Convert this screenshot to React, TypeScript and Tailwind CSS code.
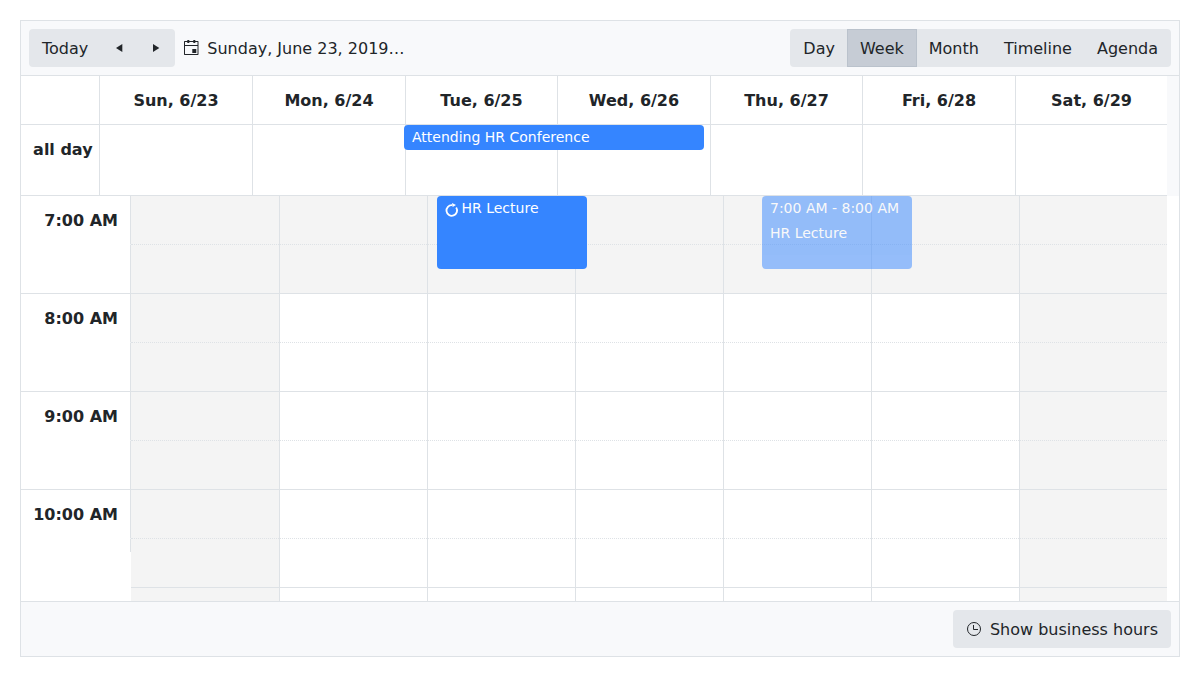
import React from "react";

const days = ["Sun, 6/23", "Mon, 6/24", "Tue, 6/25", "Wed, 6/26", "Thu, 6/27", "Fri, 6/28", "Sat, 6/29"];
const hours = ["7:00 AM", "8:00 AM", "9:00 AM", "10:00 AM"];
const views = ["Day", "Week", "Month", "Timeline", "Agenda"];

const headerGrid = "grid grid-cols-[79px_153px_153px_152px_153px_152px_153px_151px] w-[1146px] bg-white border-b border-[#dee2e6]";
const buttonBase = "h-[38px] border flex items-center";

function CalendarIcon() {
  return (
    <svg width="16" height="16" viewBox="0 0 16 16" className="block shrink-0">
      <path
        fill="#212529"
        fillRule="evenodd"
        d="M4.300 0h2v1h4V0h2v1h2.700l.5.5v13l-.5.5h-13.500l-.5-.5v-13L1.500 1H4.300zM2 2v3h12.500V2h-2.200v1h-2V2h-4v1h-2V2zM2 6v8h12.500V6zM9.300 9h4v4h-4z"
      />
    </svg>
  );
}

function ClockIcon() {
  return (
    <svg width="16" height="16" viewBox="0 0 16 16" fill="none" stroke="#212529" className="block shrink-0">
      <circle cx="8" cy="8" r="6.500" />
      <path d="M7.500 4v4.500H12" />
    </svg>
  );
}

function RecurrenceIcon() {
  return (
    <svg width="16" height="16" viewBox="0 0 16 16" fill="none" className="block shrink-0">
      <path d="M11.200 5.600A5.300 5.300 0 1 1 7.200 3.200" stroke="white" strokeWidth="1.800" />
      <path d="M7 .9L11 3L7.600 5.100z" fill="white" />
    </svg>
  );
}

function Arrow({ left }: { left?: boolean }) {
  return (
    <svg width="16" height="16" viewBox="0 0 16 16" fill="#212529" className="block">
      <path d={left ? "M11.300 4v8L5 8z" : "M5 4v8l6.300-4z"} />
    </svg>
  );
}

function Toolbar() {
  return (
    <div className="flex h-[55px] items-center justify-between border-b border-[#dee2e6] bg-[#f8f9fb] px-2">
      <div className="flex items-center">
        <div className="flex rounded bg-[#e4e7eb]">
          <button className={`${buttonBase} border-transparent px-3 pt-0.5`}>Today</button>
          <button aria-label="Previous" className={`${buttonBase} -ml-px w-[38px] justify-center border-transparent`}>
            <Arrow left />
          </button>
          <button aria-label="Next" className={`${buttonBase} -ml-px w-[38px] justify-center border-transparent`}>
            <Arrow />
          </button>
        </div>
        <div className="ml-2 flex items-center gap-2">
          <CalendarIcon />
          <span className="pt-0.5">Sunday, June 23, 2019…</span>
        </div>
      </div>
      <div className="flex rounded bg-[#e4e7eb]">
        {views.map((view, i) => (
          <button
            key={view}
            className={`${buttonBase} px-3 pt-0.5 ${i > 0 ? "-ml-px" : ""} ${
              view === "Week" ? "border-[#bac2cc] bg-[#c6ccd5]" : "border-transparent"
            }`}
          >
            {view}
          </button>
        ))}
      </div>
    </div>
  );
}

function DayHeader() {
  return (
    <div className="relative bg-[#f8f9fb]">
      <div className={`${headerGrid} h-[49px]`}>
        <div className="border-r border-[#dee2e6]" />
        {days.map((day, i) => (
          <div
            key={day}
            className={`flex items-center justify-center pt-0.5 font-bold ${i < 6 ? "border-r border-[#dee2e6]" : ""}`}
          >
            {day}
          </div>
        ))}
      </div>
      <div className={`${headerGrid} h-[71px]`}>
        <div className="border-r border-[#dee2e6] pt-[13px] pr-[6.4px] text-right font-bold">all day</div>
        {days.map((day, i) => (
          <div key={day} className={i < 6 ? "border-r border-[#dee2e6]" : ""} />
        ))}
      </div>
      <div className="absolute top-[49px] left-[383px] h-[25px] w-[300px] rounded bg-[#3585ff] px-2 text-[14px] leading-[25px] text-white">
        Attending HR Conference
      </div>
    </div>
  );
}

function Slots({ hour }: { hour: number }) {
  return (
    <>
      {[0, 1].map((half) => (
        <div key={half} className="flex h-[49px]">
          {days.map((day, i) => (
            <div
              key={day}
              className={`w-[148px] border-b border-[#dee2e6] ${
                half === 0 ? "[border-bottom-style:dotted]" : ""
              } ${i > 0 ? "border-l" : ""} ${i === 0 || i === 6 || hour === 0 ? "bg-[#f4f4f4]" : "bg-white"}`}
            />
          ))}
        </div>
      ))}
    </>
  );
}

function TimeGrid() {
  return (
    <div className="relative flex h-[405px] overflow-hidden bg-white">
      <div className="h-[356px] w-[110px] shrink-0 overflow-hidden">
        {hours.map((hour) => (
          <div key={hour}>
            <div className="h-[49px] border-r border-b border-r-[#dee2e6] border-b-transparent pt-[13px] pr-3 text-right font-bold">
              {hour}
            </div>
            <div className="h-[49px] border-r border-b border-[#dee2e6]" />
          </div>
        ))}
      </div>
      <div className="w-[1036px] shrink-0">
        {[0, 1, 2, 3, 4].map((hour) => (
          <Slots key={hour} hour={hour} />
        ))}
      </div>
      <div className="absolute top-0 left-[416px] flex h-[73px] w-[150px] rounded bg-[#3585ff] px-2 text-[14px] leading-[25px] text-white">
        <div className="mt-[6px] mr-[0.5px] h-4 w-4">
          <RecurrenceIcon />
        </div>
        HR Lecture
      </div>
      <div className="absolute top-0 left-[741px] h-[73px] w-[150px] rounded bg-[#3585ff] px-2 text-[14px] leading-[25px] text-white opacity-50">
        <div className="whitespace-nowrap">7:00 AM - 8:00 AM</div>
        <div>HR Lecture</div>
      </div>
    </div>
  );
}

export default function App() {
  return (
    <div className="h-[677px] w-[1200px] bg-white p-5 font-['DejaVu_Sans',sans-serif] text-[16px] leading-6 text-[#212529]">
      <div className="h-[637px] w-[1160px] border border-[#dee2e6]">
        <Toolbar />
        <DayHeader />
        <TimeGrid />
        <div className="flex h-[55px] items-center justify-end border-t border-[#dee2e6] bg-[#f8f9fb] px-2">
          <button className={`${buttonBase} gap-2 rounded border-transparent bg-[#e4e7eb] px-3`}>
            <ClockIcon />
            <span className="pt-0.5">Show business hours</span>
          </button>
        </div>
      </div>
    </div>
  );
}
